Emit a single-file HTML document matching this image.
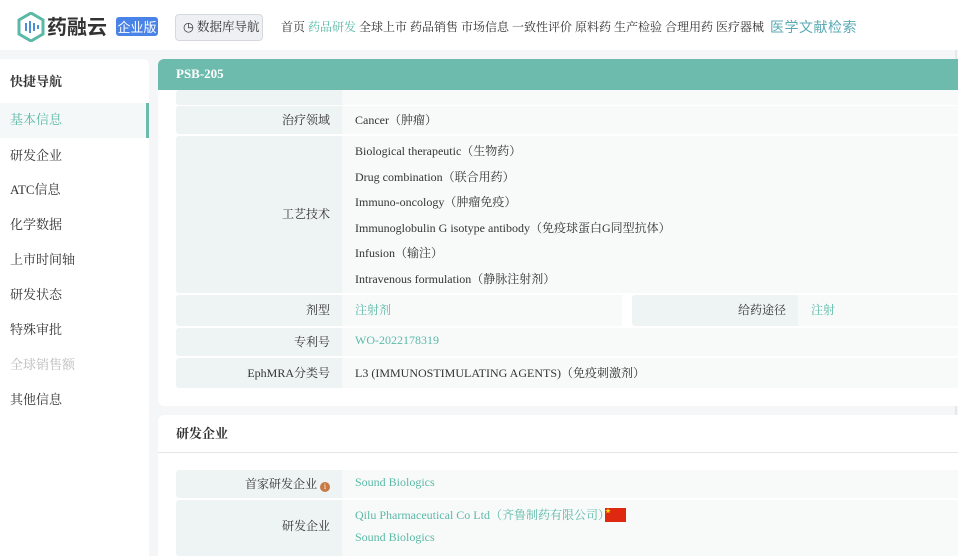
<!DOCTYPE html>
<html><head><meta charset="utf-8"><style>
*{margin:0;padding:0;box-sizing:border-box}
body{width:958px;height:556px;overflow:hidden;background:#f5f6f7;font-family:"Liberation Serif","Noto Serif CJK SC",serif;color:#333;position:relative}
.hdr{position:absolute;left:0;top:0;width:958px;height:50px;background:#fff}
.abs{position:absolute;white-space:nowrap}
.nav{top:18px;font-size:12px;color:#333}
.side{position:absolute;left:0;top:59px;width:149px;height:497px;background:#fff;border-radius:0 6px 0 0}
.si{position:absolute;left:10px;font-size:13px;color:#333}
.main{position:absolute;left:158px;top:59px;width:800px;height:347px;background:#fff;border-radius:6px 0 0 6px}
.main2{position:absolute;left:158px;top:415px;width:800px;height:141px;background:#fff;border-radius:6px 0 0 0}
.lab{position:absolute;left:176px;width:166px;background:#eef3f4;border-radius:3px 0 0 3px;font-size:12px;color:#333;text-align:right;padding-right:12px}
.val{position:absolute;left:342px;width:616px;background:#f8fafa;font-size:12px;color:#333;padding-left:13px}
.g{color:#5ab9a6}
</style></head><body>
<div class="hdr"></div>
<svg class="abs" style="left:17px;top:12px" width="28" height="30" viewBox="0 0 28 30"><path d="M14 1 L26 8 L26 22 L14 29 L2 22 L2 8 Z" fill="none" stroke="#5ab9a6" stroke-width="3"/><g fill="#4a8fd8"><rect x="8" y="11" width="2" height="8"/><rect x="12" y="9" width="2" height="12"/><rect x="16" y="11" width="2" height="8"/><rect x="20" y="13" width="2" height="4"/></g></svg>
<div class="abs" style="left:47px;top:13px;font-size:20px;font-weight:bold;font-family:'Noto Sans CJK SC',sans-serif;color:#333;line-height:26px">药融云</div>
<div class="abs" style="left:116px;top:17px;width:42px;height:19px;background:#4a83e8;border-radius:3px;color:#fff;font-size:13px;font-family:'Noto Sans CJK SC',sans-serif;text-align:center;line-height:19px">企业版</div>
<div class="abs" style="left:175px;top:14px;width:88px;height:27px;background:#eef0f4;border:1px solid #d5d8de;border-radius:4px;font-size:12.5px;line-height:25px;padding-left:7px;color:#333">◷ 数据库导航</div>
<div class="abs nav" style="left:281px">首页 <span class="g">药品研发</span> 全球上市 药品销售 市场信息 一致性评价 原料药 生产检验 合理用药 医疗器械</div>
<div class="abs" style="left:770px;top:17px;font-size:14px;color:#5aaab5;font-family:'Noto Sans CJK SC',sans-serif;letter-spacing:0.5px">医学文献检索</div>
<div class="abs" style="left:955px;top:50px;width:2px;height:506px;background:#e8e8e8"></div>

<div class="side"></div>
<div class="abs" style="left:0;top:103px;width:149px;height:35px;background:#f5f8f8"></div>
<div class="abs" style="left:146px;top:103px;width:3px;height:35px;background:#6dbbad"></div>
<div class="si" style="top:71px;font-weight:bold">快捷导航</div>
<div class="si" style="top:109px;color:#5ab9a6">基本信息</div>
<div class="si" style="top:145px">研发企业</div>
<div class="si" style="top:179px">ATC信息</div>
<div class="si" style="top:214px">化学数据</div>
<div class="si" style="top:249px">上市时间轴</div>
<div class="si" style="top:284px">研发状态</div>
<div class="si" style="top:319px">特殊审批</div>
<div class="si" style="top:354px;color:#bbb">全球销售额</div>
<div class="si" style="top:389px">其他信息</div>

<div class="main"></div>
<div class="lab" style="top:90px;height:15px"></div><div class="val" style="top:90px;height:15px"></div>
<div class="abs" style="left:158px;top:59px;width:800px;height:31px;background:#6dbbad;border-radius:6px 0 0 0;color:#fff;font-weight:bold;font-size:13px;padding-left:18px;line-height:29px">PSB-205</div>
<div class="lab" style="top:106px;height:28px;line-height:28px">治疗领域</div><div class="val" style="top:106px;height:28px;line-height:28px">Cancer（肿瘤）</div>
<div class="lab" style="top:136px;height:157px;line-height:157px">工艺技术</div>
<div class="val" style="top:136px;height:157px;line-height:25.6px;padding-top:3px">Biological therapeutic（生物药）<br>Drug combination（联合用药）<br>Immuno-oncology（肿瘤免疫）<br>Immunoglobulin G isotype antibody（免疫球蛋白G同型抗体）<br>Infusion（输注）<br>Intravenous formulation（静脉注射剂）</div>
<div class="lab" style="top:295px;height:31px;line-height:31px">剂型</div><div class="val g" style="top:295px;height:31px;line-height:31px;width:280px">注射剂</div>
<div class="lab" style="top:295px;left:632px;height:31px;line-height:31px">给药途径</div><div class="val g" style="top:295px;left:798px;width:160px;height:31px;line-height:31px">注射</div>
<div class="lab" style="top:328px;height:28px;line-height:28px">专利号</div><div class="val g" style="top:328px;height:28px;line-height:24px">WO-2022178319</div>
<div class="lab" style="top:358px;height:30px;line-height:30px">EphMRA分类号</div><div class="val" style="top:358px;height:30px;line-height:30px">L3 (IMMUNOSTIMULATING AGENTS)（免疫刺激剂）</div>

<div class="main2"></div>
<div class="abs" style="left:176px;top:424px;font-size:13px;font-weight:bold;line-height:20px">研发企业</div>
<div class="abs" style="left:158px;top:452px;width:800px;height:1px;background:#e6e6e6"></div>
<div class="lab" style="top:470px;height:28px;line-height:28px">首家研发企业 <span style="display:inline-block;width:10px;height:10px;border-radius:50%;background:#c87a44;color:#fff;font-size:8px;line-height:10px;text-align:center;vertical-align:-1px">i</span></div><div class="val g" style="top:470px;height:28px;line-height:25px">Sound Biologics</div>
<div class="lab" style="top:500px;height:56px;line-height:52px">研发企业</div>
<div class="val g" style="top:500px;height:56px;line-height:21px;padding-top:5px">Qilu Pharmaceutical Co Ltd（齐鲁制药有限公司）</div>
<div class="abs" style="left:605px;top:508px;width:21px;height:14px;background:#de2910;color:#ffde00;font-size:6px;line-height:8px">★</div>
<div class="abs g" style="left:355px;top:527px;font-size:12px;line-height:21px">Sound Biologics</div>
</body></html>
